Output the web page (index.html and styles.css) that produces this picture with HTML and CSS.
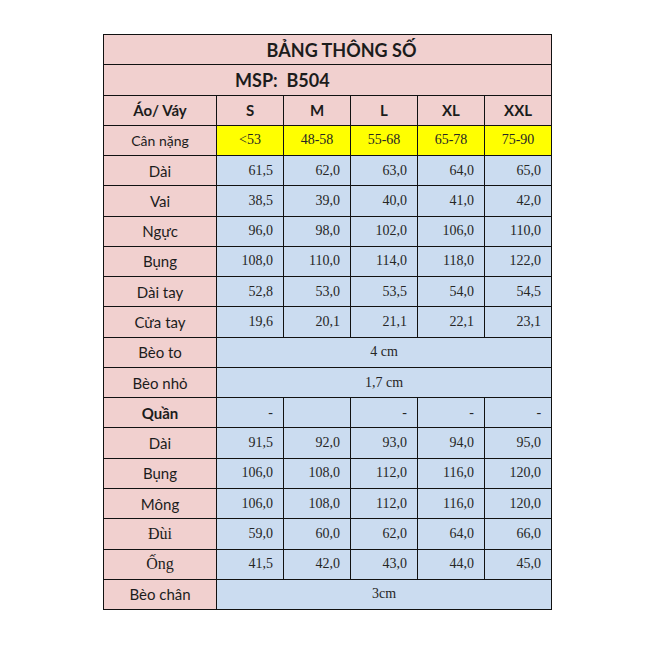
FILE: index.html
```html
<!DOCTYPE html>
<html>
<head>
<meta charset="utf-8">
<link rel="stylesheet" href="styles.css">
</head>
<body>
<div class="page">
<table class="sheet">
  <colgroup>
    <col class="c-label"><col class="c-size"><col class="c-size"><col class="c-size"><col class="c-size"><col class="c-size">
  </colgroup>
  <tr><td colspan="6" class="title">BẢNG THÔNG SỐ</td></tr>
  <tr><td colspan="6" class="msp">MSP:&nbsp; B504</td></tr>
  <tr class="head"><td class="lab b">Áo/ Váy</td><td>S</td><td>M</td><td>L</td><td>XL</td><td>XXL</td></tr>
  <tr class="weight"><td class="lab">Cân nặng</td><td>&lt;53</td><td>48-58</td><td>55-68</td><td>65-78</td><td>75-90</td></tr>
  <tr><td class="lab">Dài</td><td class="v">61,5</td><td class="v">62,0</td><td class="v">63,0</td><td class="v">64,0</td><td class="v">65,0</td></tr>
  <tr><td class="lab">Vai</td><td class="v">38,5</td><td class="v">39,0</td><td class="v">40,0</td><td class="v">41,0</td><td class="v">42,0</td></tr>
  <tr><td class="lab">Ngực</td><td class="v">96,0</td><td class="v">98,0</td><td class="v">102,0</td><td class="v">106,0</td><td class="v">110,0</td></tr>
  <tr><td class="lab">Bụng</td><td class="v">108,0</td><td class="v">110,0</td><td class="v">114,0</td><td class="v">118,0</td><td class="v">122,0</td></tr>
  <tr><td class="lab">Dài tay</td><td class="v">52,8</td><td class="v">53,0</td><td class="v">53,5</td><td class="v">54,0</td><td class="v">54,5</td></tr>
  <tr><td class="lab">Cửa tay</td><td class="v">19,6</td><td class="v">20,1</td><td class="v">21,1</td><td class="v">22,1</td><td class="v">23,1</td></tr>
  <tr><td class="lab">Bèo to</td><td colspan="5" class="merged">4 cm</td></tr>
  <tr><td class="lab">Bèo nhỏ</td><td colspan="5" class="merged">1,7 cm</td></tr>
  <tr><td class="lab b">Quần</td><td class="v">-</td><td class="v"></td><td class="v">-</td><td class="v">-</td><td class="v">-</td></tr>
  <tr><td class="lab">Dài</td><td class="v">91,5</td><td class="v">92,0</td><td class="v">93,0</td><td class="v">94,0</td><td class="v">95,0</td></tr>
  <tr><td class="lab">Bụng</td><td class="v">106,0</td><td class="v">108,0</td><td class="v">112,0</td><td class="v">116,0</td><td class="v">120,0</td></tr>
  <tr><td class="lab">Mông</td><td class="v">106,0</td><td class="v">108,0</td><td class="v">112,0</td><td class="v">116,0</td><td class="v">120,0</td></tr>
  <tr><td class="lab serif">Đùi</td><td class="v">59,0</td><td class="v">60,0</td><td class="v">62,0</td><td class="v">64,0</td><td class="v">66,0</td></tr>
  <tr><td class="lab serif">Ống</td><td class="v">41,5</td><td class="v">42,0</td><td class="v">43,0</td><td class="v">44,0</td><td class="v">45,0</td></tr>
  <tr><td class="lab">Bèo chân</td><td colspan="5" class="merged">3cm</td></tr>
</table>
</div>
</body>
</html>
```
FILE: styles.css
```css
html, body {
  margin: 0;
  padding: 0;
  background: #ffffff;
}
.page {
  padding: 34px 0 0 103px;
}
.sheet {
  border-collapse: collapse;
  table-layout: fixed;
  width: 449px;
  font-family: Lato, "Liberation Sans", sans-serif;
  color: #1c1c1c;
}
.c-label { width: 113px; }
.c-size { width: 67px; }
.sheet tr { height: 30.28px; }
.sheet td {
  border: 1px solid #111;
  padding: 0;
  background: #cbdcf0;
  font-family: "Liberation Serif", serif;
  font-size: 14px;
  color: #262626;
  text-align: center;
  vertical-align: middle;
  white-space: nowrap;
}
.sheet td.title {
  background: #f1d0cf;
  font-family: Lato, "Liberation Sans", sans-serif;
  font-weight: bold;
  font-size: 18px;
  color: #1c1c1c;
  padding-left: 28px;
}
.sheet td.msp {
  background: #f1d0cf;
  font-family: Lato, "Liberation Sans", sans-serif;
  font-weight: bold;
  font-size: 18px;
  color: #1c1c1c;
  text-align: left;
  padding-left: 131px;
}
.sheet tr.head td {
  background: #f1d0cf;
  font-family: Lato, "Liberation Sans", sans-serif;
  font-weight: bold;
  font-size: 15px;
  color: #1c1c1c;
}
.sheet tr.weight td {
  background: #ffff00;
  font-size: 14px;
}
.sheet td.lab {
  background: #f1d0cf;
  font-family: Lato, "Liberation Sans", sans-serif;
  font-size: 15px;
  color: #1c1c1c;
}
.sheet td.lab.serif {
  font-family: "Liberation Serif", serif;
  font-size: 16px;
}
.sheet td.b {
  font-weight: bold;
}
.sheet tr.weight td.lab {
  background: #f1d0cf;
}
.sheet td.v {
  text-align: right;
  padding-right: 10px;
}
.sheet td.merged {
  text-align: center;
}
```
